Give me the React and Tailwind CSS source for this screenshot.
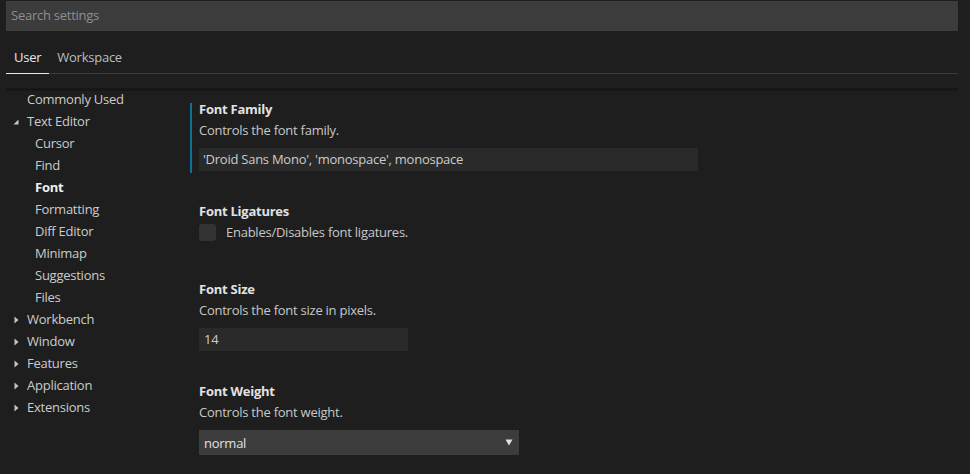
import React from "react";

const Twisty = ({ open }) =>
  open ? (
    <svg width="6" height="6" viewBox="0 0 6 6" className="block">
      <path d="M5.5 0.5 L5.5 5.5 L0.5 5.5 Z" fill="#c5c5c5" />
    </svg>
  ) : (
    <svg width="5" height="8" viewBox="0 0 5 8" className="block">
      <path d="M0.5 0.5 L4.5 4 L0.5 7.5 Z" fill="#c5c5c5" />
    </svg>
  );

const navTop = [
  { label: "Commonly Used", level: 0 },
  { label: "Text Editor", level: 0, twisty: "open" },
  { label: "Cursor", level: 1 },
  { label: "Find", level: 1 },
  { label: "Font", level: 1, active: true },
  { label: "Formatting", level: 1 },
  { label: "Diff Editor", level: 1 },
  { label: "Minimap", level: 1 },
  { label: "Suggestions", level: 1 },
  { label: "Files", level: 1 },
  { label: "Workbench", level: 0, twisty: "closed" },
  { label: "Window", level: 0, twisty: "closed" },
  { label: "Features", level: 0, twisty: "closed" },
  { label: "Application", level: 0, twisty: "closed" },
  { label: "Extensions", level: 0, twisty: "closed" },
];

export default function App() {
  return (
    <div
      className="w-[970px] h-[474px] bg-[#1e1e1e] overflow-hidden text-[13px] tracking-[-0.25px] text-[#cccccc]"
      style={{ fontFamily: '"Open Sans", "Noto Sans", sans-serif' }}
    >
      <div className="mx-[6px] mt-[1px] h-[30px] w-[952px] bg-[#3c3c3c] px-[5px] flex items-center text-[#8f8f8f]">
        Search settings
      </div>
      <div className="mx-[6px] w-[952px] h-[43px] flex items-end border-b border-[#3c3c3c]">
        <div className="px-2 pb-[7px] leading-[18px] text-[#e7e7e7] border-b border-[#e7e7e7] -mb-px">
          User
        </div>
        <div className="px-2 pb-[7px] leading-[18px] text-[#bdbdbd]">Workspace</div>
      </div>
      <div className="relative mt-[15px] flex">
        <div className="absolute left-[6px] -top-px w-[952px] h-[3px] bg-[#171717]" />
        <div className="w-[190px] shrink-0 flex flex-col">
          {navTop.map((n) => (
            <div
              key={n.label}
              className={`h-[22px] flex items-center ${n.level === 1 ? "pl-[35px]" : "pl-[27px]"} relative ${
                n.active ? "font-bold text-[#f0f0f0]" : ""
              }`}
            >
              {n.twisty && (
                <span className={`absolute ${n.twisty === "open" ? "left-[13px] top-[8px]" : "left-[14px] top-[7px]"}`}>
                  <Twisty open={n.twisty === "open"} />
                </span>
              )}
              {n.label}
            </div>
          ))}
        </div>
        <div className="flex-1 flex flex-col">
          <div className="mt-[14px] border-l-2 border-[#0e7196] pl-[7px] pb-[2px]">
            <div className="leading-[12px] font-bold text-[#e2e2e2]">Font Family</div>
            <div className="mt-[6px] leading-[18px] text-[#c8c8c8]">Controls the font family.</div>
            <div className="mt-[9px] w-[499px] h-[23px] bg-[#2a2a2a] px-[4px] pt-[1px] flex items-center text-[#cccccc]">
              'Droid Sans Mono', 'monospace', monospace
            </div>
          </div>
          <div className="pl-[9px]">
            <div className="mt-[29px] leading-[18px] font-bold text-[#e2e2e2]">Font Ligatures</div>
            <div className="mt-[4px] h-[16px] flex items-center">
              <div className="w-[17px] h-[17px] rounded-[3px] bg-[#333333] shrink-0" />
              <span className="ml-[10px] pt-[1px] text-[#c8c8c8]">Enables/Disables font ligatures.</span>
            </div>
            <div className="mt-[40px] leading-[18px] font-bold text-[#e2e2e2]">Font Size</div>
            <div className="mt-[3px] leading-[18px] text-[#c8c8c8]">Controls the font size in pixels.</div>
            <div className="mt-[9px] w-[209px] h-[23px] bg-[#2a2a2a] px-[5px] pt-[1px] flex items-center text-[#cccccc]">
              14
            </div>
            <div className="mt-[31px] leading-[18px] font-bold text-[#e2e2e2]">Font Weight</div>
            <div className="mt-[3px] leading-[18px] text-[#c8c8c8]">Controls the font weight.</div>
            <div className="mt-[9px] w-[320px] h-[25px] bg-[#3c3c3c] pl-[5px] pr-[6px] flex items-center justify-between text-[#e0e0e0]">
              <span className="pt-[2px]">normal</span>
              <svg width="8" height="7" viewBox="0 0 8 7">
                <path d="M0.5 0.5 L7.5 0.5 L4 6.5 Z" fill="#e0e0e0" />
              </svg>
            </div>
          </div>
        </div>
      </div>
    </div>
  );
}
